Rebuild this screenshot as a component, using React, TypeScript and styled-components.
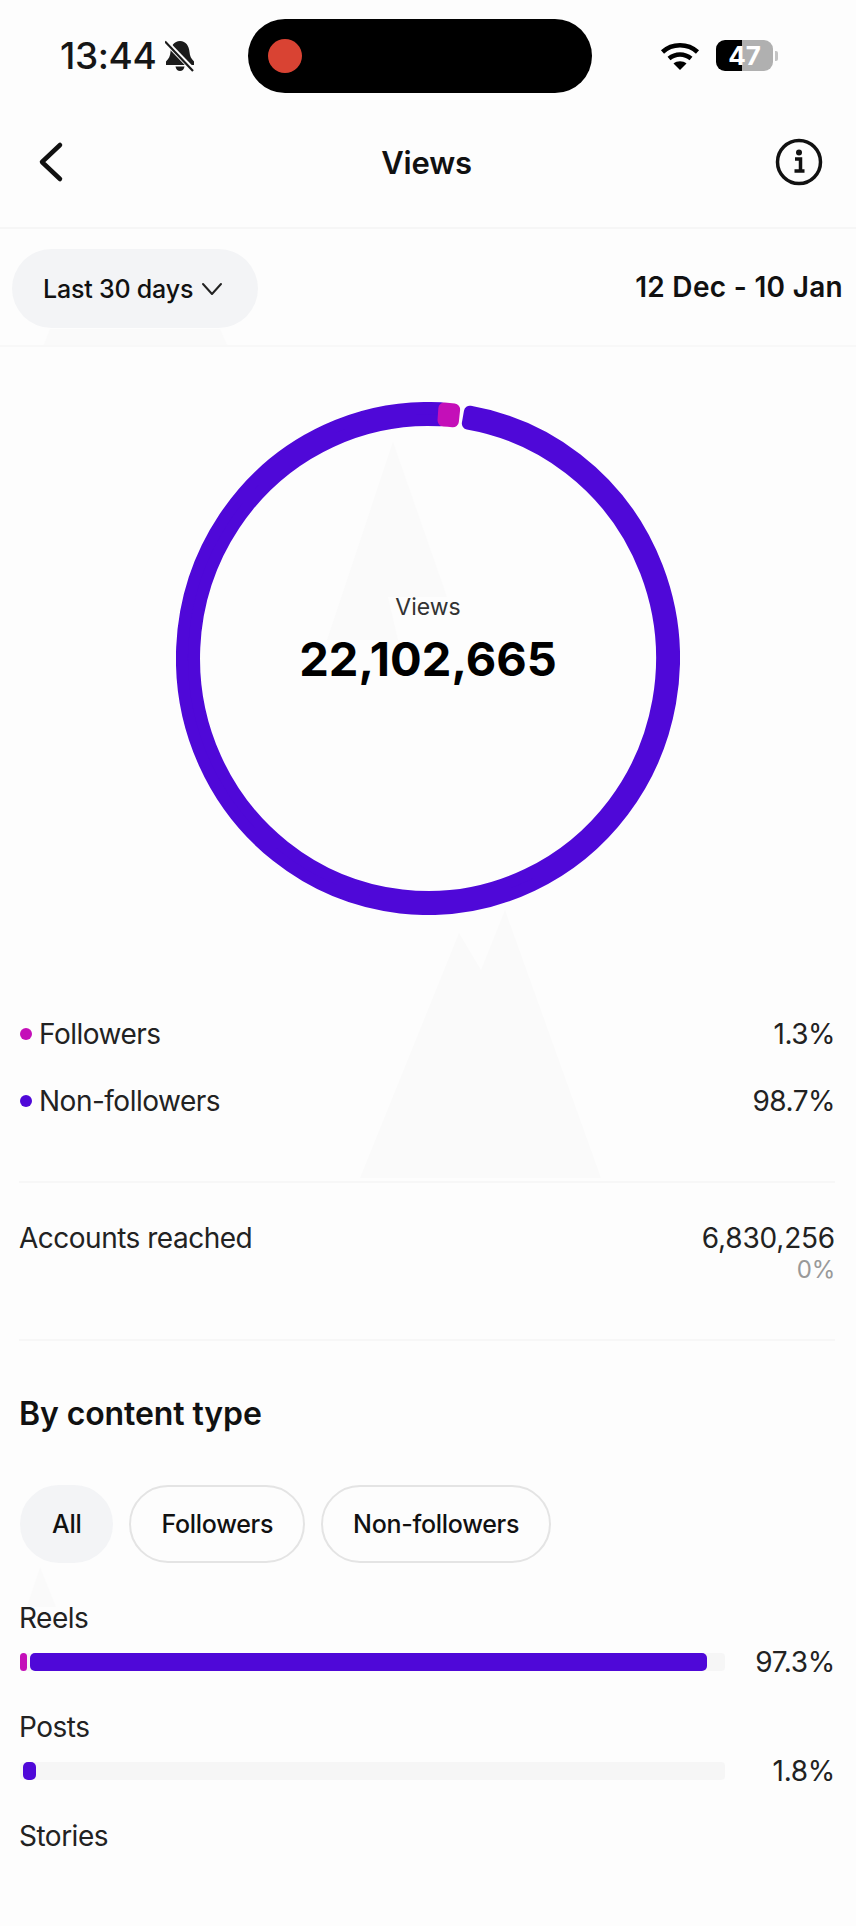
import { createGlobalStyle, styled } from 'styled-components'

const PURPLE = '#4f08d8'
const MAGENTA = '#c40fb8'
const GHOST = '#fafafa'

const GlobalStyle = createGlobalStyle`
  html, body {
    margin: 0;
    padding: 0;
    background: #fdfdfd;
  }
  body {
    font-family: Inter, "Liberation Sans", sans-serif;
    color: #111;
  }
`

const Page = styled.div`
  position: relative;
  width: 856px;
  height: 1926px;
  overflow: hidden;
  background: #fdfdfd;
  display: flex;
  flex-direction: column;
`

const Watermark = styled.svg`
  position: absolute;
  left: 0;
  top: 0;
  width: 856px;
  height: 1926px;
`

const Layer = styled.div`
  position: relative;
  display: flex;
  flex-direction: column;
`

const StatusBar = styled.div`
  height: 112px;
  display: grid;
  grid-template-columns: 248px 344px 1fr;
  align-items: start;
  padding-top: 19px;
  box-sizing: border-box;
`

const Clock = styled.div`
  display: flex;
  align-items: center;
  gap: 9px;
  padding: 19px 0 0 60px;
  font-size: 37px;
  line-height: 36px;
  font-weight: 500;
  letter-spacing: -0.4px;
  color: #161616;
`

const Island = styled.div`
  height: 74px;
  border-radius: 37px;
  background: #000;
  display: flex;
  align-items: center;
  padding-left: 20px;
  box-sizing: border-box;
`

const RecordDot = styled.div`
  width: 34px;
  height: 34px;
  border-radius: 50%;
  background: #d94333;
`

const StatusRight = styled.div`
  display: flex;
  align-items: center;
  gap: 16px;
  padding: 21px 0 0 68px;
`

const Battery = styled.div`
  width: 57px;
  height: 31px;
  border-radius: 9px;
  overflow: hidden;
  background: linear-gradient(90deg, #000 0 46%, #b0b0b0 46% 100%);
  color: #fff;
  font-size: 26px;
  line-height: 31px;
  font-weight: 700;
  text-align: center;
`

const BatteryCap = styled.div`
  width: 3px;
  height: 10px;
  margin-left: -14px;
  border-radius: 0 2px 2px 0;
  background: #c4c4c4;
`

const NavBar = styled.div`
  height: 100px;
  display: flex;
  align-items: center;
  justify-content: space-between;
  padding: 0 33px 15px 36px;
  border-bottom: 2px solid #f6f6f6;
`

const NavTitle = styled.div`
  font-size: 31px;
  font-weight: 600;
  letter-spacing: -0.2px;
  margin-left: 12px;
`

const FilterRow = styled.div`
  height: 118px;
  display: flex;
  align-items: flex-start;
  justify-content: space-between;
  padding: 20px 13px 0 12px;
  border-bottom: 2px solid #f8f8f8;
  box-sizing: border-box;
`

const RangePill = styled.div`
  width: 246px;
  height: 79px;
  border-radius: 40px;
  background: #f3f4f6;
  display: flex;
  align-items: center;
  gap: 8px;
  padding-left: 31px;
  box-sizing: border-box;
  font-size: 25px;
  font-weight: 500;
  letter-spacing: -0.2px;
`

const DateRange = styled.div`
  font-size: 28px;
  font-weight: 600;
  line-height: 76px;
  letter-spacing: 0.3px;
`

const DonutWrap = styled.div`
  position: relative;
  height: 620px;
  display: flex;
  justify-content: center;
  align-items: flex-start;
  padding-top: 55px;
  box-sizing: border-box;
`

const DonutCentre = styled.div`
  position: absolute;
  left: 0;
  right: 0;
  top: 246px;
  display: flex;
  flex-direction: column;
  align-items: center;
  gap: 13px;
`

const DonutLabel = styled.div`
  font-size: 23px;
  line-height: 28px;
  color: #333;
`

const DonutValue = styled.div`
  font-size: 47px;
  line-height: 50px;
  font-weight: 700;
  color: #000;
`

const Content = styled.div`
  padding: 0 21px 0 19px;
  display: flex;
  flex-direction: column;
`

const Legend = styled.div`
  display: flex;
  flex-direction: column;
  gap: 31px;
  padding: 49px 0 62px;
  border-bottom: 2px solid #f7f7f7;
`

const Row = styled.div`
  display: flex;
  justify-content: space-between;
  align-items: center;
  font-size: 28px;
  line-height: 36px;
  letter-spacing: -0.5px;
  color: #222;
`

const LegendLabel = styled.div`
  display: flex;
  align-items: center;
  gap: 7px;
`

const Dot = styled.span<{ $color: string }>`
  width: 12px;
  height: 12px;
  margin-left: 1px;
  border-radius: 50%;
  background: ${(p) => p.$color};
`

const Reached = styled.div`
  display: flex;
  justify-content: space-between;
  padding: 37px 0 55px;
  font-size: 28px;
  line-height: 36px;
  letter-spacing: -0.5px;
  color: #222;
  border-bottom: 2px solid #f7f7f7;
`

const ReachedValue = styled.div`
  display: flex;
  flex-direction: column;
  align-items: flex-end;
  letter-spacing: -0.2px;
`

const Delta = styled.div`
  font-size: 24px;
  line-height: 28px;
  color: #999;
`

const Heading = styled.div`
  margin-top: 54px;
  font-size: 32px;
  line-height: 38px;
  font-weight: 600;
  letter-spacing: -0.1px;
`

const Chips = styled.div`
  display: flex;
  gap: 16px;
  margin: 52px 0 0 1px;
`

const Chip = styled.div<{ $active?: boolean }>`
  height: 78px;
  border-radius: 39px;
  padding: 0 30px;
  display: flex;
  align-items: center;
  box-sizing: border-box;
  font-size: 25px;
  font-weight: 500;
  letter-spacing: -0.3px;
  background: ${(p) => (p.$active ? '#f3f4f6' : 'transparent')};
  border: 2px solid ${(p) => (p.$active ? '#f3f4f6' : '#e4e4e4')};
`

const Metric = styled.div`
  margin-bottom: 29px;
`

const MetricName = styled.div`
  font-size: 28px;
  line-height: 36px;
  letter-spacing: -0.5px;
  color: #222;
`

const BarRow = styled.div`
  display: flex;
  justify-content: space-between;
  align-items: center;
  height: 36px;
  margin-top: 8px;
  font-size: 28px;
  letter-spacing: -0.3px;
  color: #222;
`

const BarTrack = styled.div`
  width: 705px;
  height: 18px;
  margin-left: 1px;
  border-radius: 4px;
  background: #f6f6f6;
  display: flex;
  gap: 3px;
`

const BarFill = styled.div<{ $color: string }>`
  height: 18px;
  border-radius: 5px;
  background: ${(p) => p.$color};
`

const MetricList = styled.div`
  margin-top: 37px;
`

function BellOff() {
  return (
    <svg width="30" height="32" viewBox="0 0 30 32">
      <path d="M15 1c-6 0-9 5-9.500 11-.4 4-1.500 6.500-4.500 9.500V25h28v-3.500c-3-3-4.100-5.500-4.500-9.500C24 6 21 1 15 1z" fill="#1b1b1b" />
      <path d="M10.500 26.500c.5 3 2.300 4.500 4.500 4.500s4-1.500 4.500-4.500z" fill="#1b1b1b" />
      <path d="M2 3l26 27" stroke="#fdfdfd" strokeWidth="5" />
      <path d="M0 1.500L28 31" stroke="#1b1b1b" strokeWidth="2.200" />
    </svg>
  )
}

function Wifi() {
  return (
    <svg width="40" height="30" viewBox="0 0 40 30" fill="none" stroke="#000" strokeLinecap="butt">
      <path d="M2.500 11C12 2 28 2 37.500 11" strokeWidth="4.500" />
      <path d="M9 17.500c6.500-5.500 15.500-5.500 22 0" strokeWidth="4.500" />
      <path d="M20 29l-6.500-6.500c3.500-3 9.500-3 13 0z" fill="#000" stroke="none" />
    </svg>
  )
}

function BackIcon() {
  return (
    <svg width="30" height="44" viewBox="0 0 30 44" fill="none" stroke="#111" strokeWidth="4.500" strokeLinecap="round" strokeLinejoin="round">
      <path d="M24 5L6 22l18 17" />
    </svg>
  )
}

function InfoIcon() {
  return (
    <svg width="48" height="48" viewBox="0 0 48 48" fill="none">
      <circle cx="24" cy="24" r="21.500" stroke="#111" strokeWidth="3.500" />
      <circle cx="24" cy="14.500" r="3" fill="#111" />
      <path d="M20 21h5.500v11.500M19.500 33h10" stroke="#111" strokeWidth="3.500" />
    </svg>
  )
}

function Chevron() {
  return (
    <svg width="22" height="16" viewBox="0 0 22 16" fill="none" stroke="#222" strokeWidth="2" strokeLinecap="round" strokeLinejoin="round">
      <path d="M2 3l9 10 9-10" />
    </svg>
  )
}

// the ring in the picture is a little taller than it is wide
const RX = 240
const RY = 244.5
const CX = 252
const CY = 256.5
const INSET = 6

const onRing = (rx: number, ry: number, deg: number) => {
  const a = ((deg - 90) * Math.PI) / 180
  return `${(CX + rx * Math.cos(a)).toFixed(2)} ${(CY + ry * Math.sin(a)).toFixed(2)}`
}

// ring segment, angles clockwise from 12 o'clock. The stroke rounds its corners.
const segment = (from: number, to: number) => {
  const half = 12 - INSET
  const large = to - from > 180 ? 1 : 0
  return [
    `M${onRing(RX + half, RY + half, from)}`,
    `A${RX + half} ${RY + half} 0 ${large} 1 ${onRing(RX + half, RY + half, to)}`,
    `L${onRing(RX - half, RY - half, to)}`,
    `A${RX - half} ${RY - half} 0 ${large} 0 ${onRing(RX - half, RY - half, from)}`,
    'Z',
  ].join(' ')
}

function Donut() {
  return (
    <svg width="504" height="513" viewBox="0 0 504 513" strokeWidth={INSET * 2} strokeLinejoin="round">
      <path d={segment(9.8, 363)} fill={PURPLE} stroke={PURPLE} />
      <path d={segment(3.8, 6.1)} fill={MAGENTA} stroke={MAGENTA} />
    </svg>
  )
}

const metrics = [
  { name: 'Reels', value: '97.3%', parts: [{ color: MAGENTA, width: 7 }, { color: PURPLE, width: 677 }] },
  { name: 'Posts', value: '1.8%', parts: [{ color: PURPLE, width: 13 }], inset: true },
]

export default function App() {
  return (
    <Page>
      <GlobalStyle />
      <Watermark viewBox="0 0 856 1926" fill={GHOST}>
        <path d="M43 347h185l-8-18H50z" />
        <path d="M393 442l54 155h-59l10 43h-71z" />
        <path d="M360 1178l99-245 22 37 24-60 96 268z" />
        <path d="M27 1607l13-40 16 40z" />
      </Watermark>
      <Layer>
        <StatusBar>
          <Clock>
            13:44
            <BellOff />
          </Clock>
          <Island>
            <RecordDot />
          </Island>
          <StatusRight>
            <Wifi />
            <Battery>47</Battery>
            <BatteryCap />
          </StatusRight>
        </StatusBar>
        <NavBar>
          <BackIcon />
          <NavTitle>Views</NavTitle>
          <InfoIcon />
        </NavBar>
        <FilterRow>
          <RangePill>
            Last 30 days
            <Chevron />
          </RangePill>
          <DateRange>12 Dec - 10 Jan</DateRange>
        </FilterRow>
        <DonutWrap>
          <Donut />
          <DonutCentre>
            <DonutLabel>Views</DonutLabel>
            <DonutValue>22,102,665</DonutValue>
          </DonutCentre>
        </DonutWrap>
        <Content>
          <Legend>
            <Row>
              <LegendLabel>
                <Dot $color={MAGENTA} />
                Followers
              </LegendLabel>
              1.3%
            </Row>
            <Row>
              <LegendLabel>
                <Dot $color={PURPLE} />
                Non-followers
              </LegendLabel>
              98.7%
            </Row>
          </Legend>
          <Reached>
            Accounts reached
            <ReachedValue>
              6,830,256
              <Delta>0%</Delta>
            </ReachedValue>
          </Reached>
          <Heading>By content type</Heading>
          <Chips>
            <Chip $active>All</Chip>
            <Chip>Followers</Chip>
            <Chip>Non-followers</Chip>
          </Chips>
          <MetricList>
            {metrics.map((m) => (
              <Metric key={m.name}>
                <MetricName>{m.name}</MetricName>
                <BarRow>
                  <BarTrack>
                    {m.parts.map((part) => (
                      <BarFill key={part.color} $color={part.color} style={{ width: part.width, marginLeft: m.inset ? 3 : 0 }} />
                    ))}
                  </BarTrack>
                  {m.value}
                </BarRow>
              </Metric>
            ))}
            <MetricName>Stories</MetricName>
          </MetricList>
        </Content>
      </Layer>
    </Page>
  )
}
